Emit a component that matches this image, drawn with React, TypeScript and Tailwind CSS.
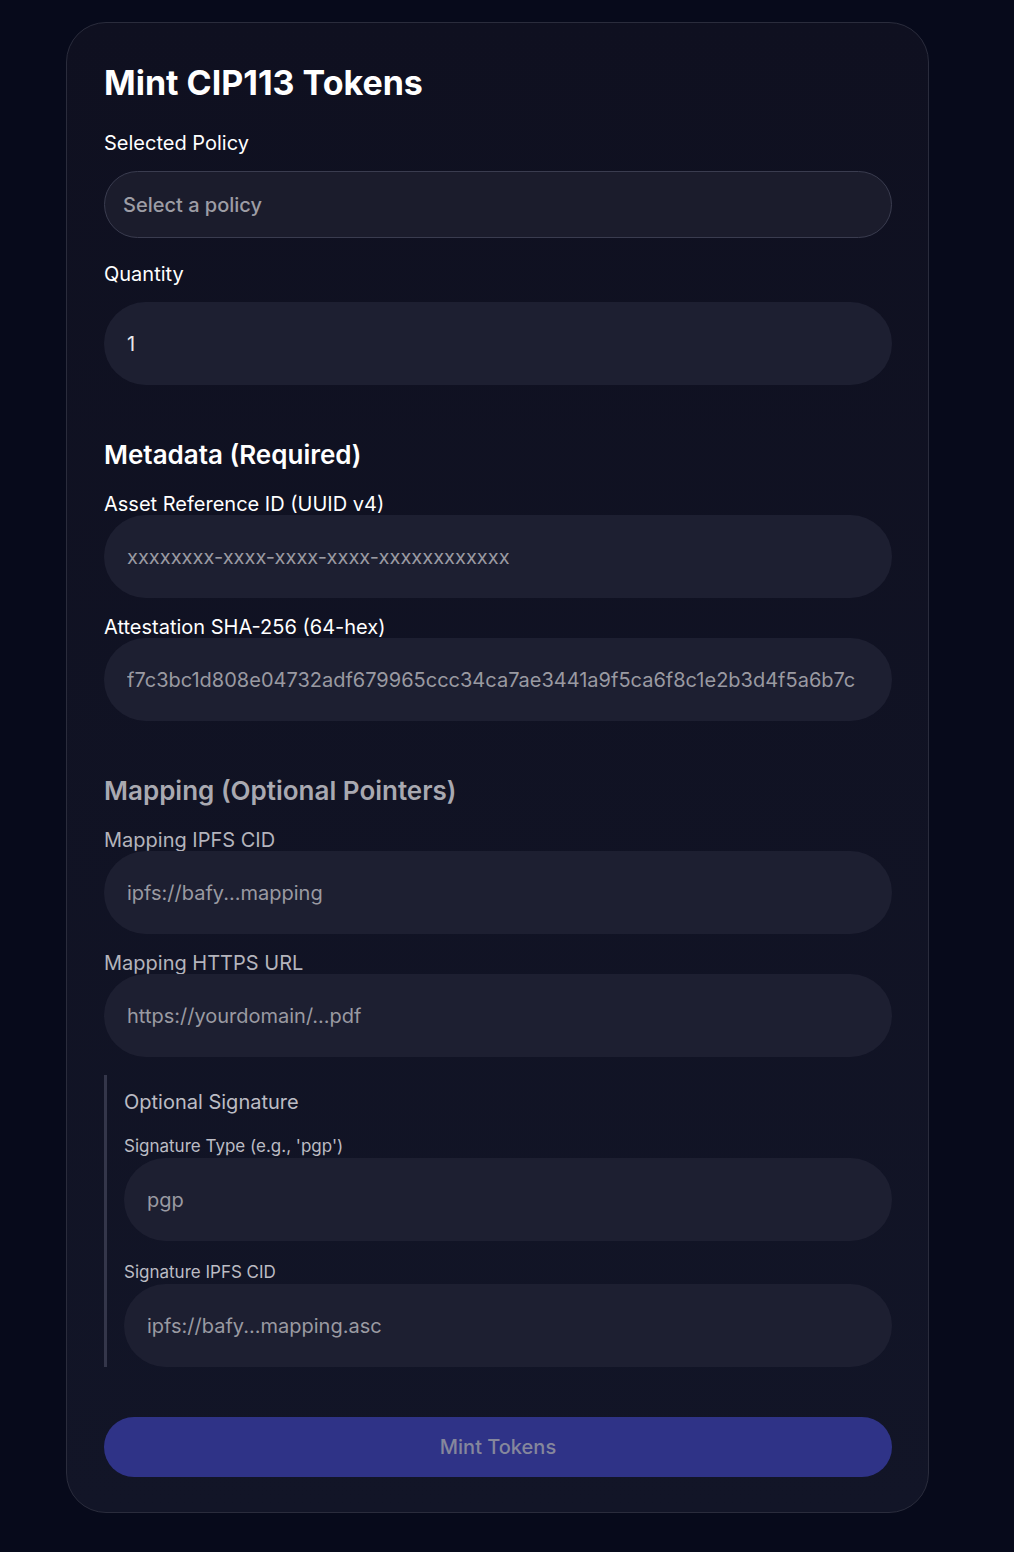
import React, { useState } from 'react';

const font = { fontFamily: 'Inter, "Noto Sans", sans-serif' };

interface FieldProps {
    label: string;
    placeholder: string;
    value?: string;
    muted?: boolean;
    small?: boolean;
}

const Field: React.FC<FieldProps> = ({ label, placeholder, value, muted, small }) => {
    const [val, setVal] = useState(value ?? '');
    return (
        <div className="flex flex-col">
            <label
                className={
                    small
                        ? 'text-[17px] leading-[24px] text-[#bcbcc4]'
                        : muted
                          ? 'text-[20px] leading-[22px] text-[#b4b4bc]'
                          : 'text-[20px] leading-[22px] text-white'
                }
            >
                {label}
            </label>
            <input
                value={val}
                onChange={(e) => setVal(e.target.value)}
                placeholder={placeholder}
                className="h-[83px] w-full rounded-full bg-[#1d1f31] px-[23px] text-[20px] text-[#e6e6ea] placeholder:text-[#9a9aa2] outline-none"
                style={font}
            />
        </div>
    );
};

export default function App() {
    const [qty, setQty] = useState('1');

    return (
        <div className="min-h-screen bg-[#070a1b] pt-[22px] pb-[38px]" style={font}>
            <div className="ml-[66px] w-[863px] rounded-[40px] border border-[#2a2c3c] bg-gradient-to-b from-[#0f1020] to-[#121527] pt-10 pr-[36px] pb-[35px] pl-[37px]">
                <h1 className="text-[34px] leading-[40px] font-bold text-white">Mint CIP113 Tokens</h1>

                <div className="mt-7 flex flex-col">
                    <label className="text-[20px] leading-[24px] text-white">Selected Policy</label>
                    <button className="mt-4 flex h-[67px] w-full items-center rounded-full border border-[#3a3c4f] bg-[#1b1c2c] px-[18px] text-left text-[20px] font-medium text-[#9d9da5]">
                        Select a policy
                    </button>
                </div>

                <div className="mt-6 flex flex-col">
                    <label className="text-[20px] leading-[24px] text-white">Quantity</label>
                    <input
                        value={qty}
                        onChange={(e) => setQty(e.target.value)}
                        className="mt-4 h-[83px] w-full rounded-full bg-[#1d1f31] px-[23px] text-[20px] text-[#e8e8ec] outline-none"
                        style={font}
                    />
                </div>

                <h2 className="mt-[54px] text-[26px] leading-[32px] font-semibold text-white">Metadata (Required)</h2>
                <div className="mt-[22px] flex flex-col gap-[18px]">
                    <Field label="Asset Reference ID (UUID v4)" placeholder="xxxxxxxx-xxxx-xxxx-xxxx-xxxxxxxxxxxx" />
                    <Field
                        label="Attestation SHA-256 (64-hex)"
                        placeholder="f7c3bc1d808e04732adf679965ccc34ca7ae3441a9f5ca6f8c1e2b3d4f5a6b7c"
                    />
                </div>

                <h2 className="mt-[54px] text-[26px] leading-[32px] font-semibold text-[#a9a9b1]">
                    Mapping (Optional Pointers)
                </h2>
                <div className="mt-[22px] flex flex-col gap-[18px]">
                    <Field muted label="Mapping IPFS CID" placeholder="ipfs://bafy...mapping" />
                    <Field muted label="Mapping HTTPS URL" placeholder="https://yourdomain/...pdf" />
                </div>

                <div className="mt-[18px] border-l-[3px] border-[#34364a] pt-[14px] pl-[17px]">
                    <h3 className="text-[20px] leading-[26px] text-[#bcbcc4]">Optional Signature</h3>
                    <div className="mt-[19px] flex flex-col gap-[19px]">
                        <Field small label="Signature Type (e.g., 'pgp')" placeholder="pgp" />
                        <Field small label="Signature IPFS CID" placeholder="ipfs://bafy...mapping.asc" />
                    </div>
                </div>

                <button
                    disabled
                    className="mt-[50px] h-[60px] w-full rounded-full bg-[#2f3387] text-[20px] font-medium text-[#85879c]"
                >
                    Mint Tokens
                </button>
            </div>
        </div>
    );
}
